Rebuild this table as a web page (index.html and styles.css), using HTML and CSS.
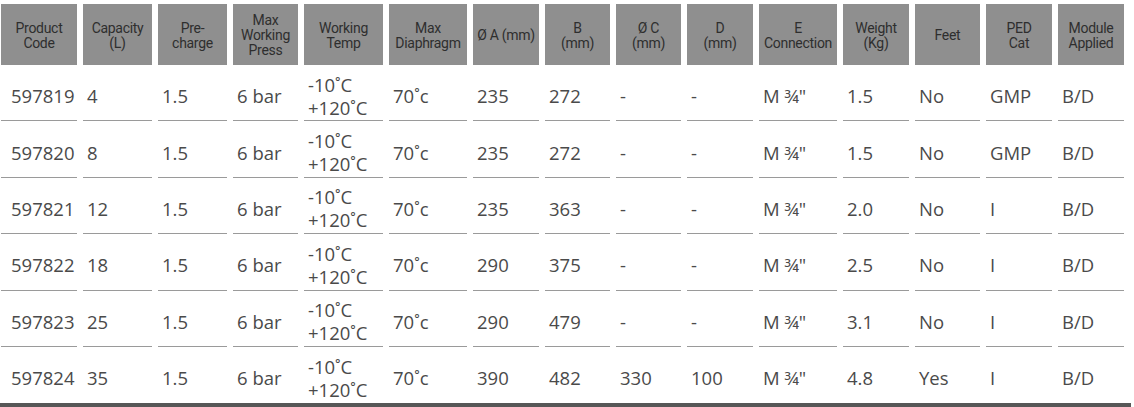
FILE: index.html
```html
<!DOCTYPE html>
<html lang="en">
<head>
<meta charset="utf-8">
<title>Expansion vessels</title>
<link rel="stylesheet" href="styles.css">
</head>
<body>
<div class="table">
  <div class="row head">
    <div class="th">Product<br>Code</div>
    <div class="th">Capacity<br>(L)</div>
    <div class="th">Pre-<br>charge</div>
    <div class="th">Max<br>Working<br>Press</div>
    <div class="th">Working<br>Temp</div>
    <div class="th">Max<br>Diaphragm</div>
    <div class="th">Ø A (mm)</div>
    <div class="th">B<br>(mm)</div>
    <div class="th">Ø C<br>(mm)</div>
    <div class="th">D<br>(mm)</div>
    <div class="th">E<br>Connection</div>
    <div class="th">Weight<br>(Kg)</div>
    <div class="th">Feet</div>
    <div class="th">PED<br>Cat</div>
    <div class="th">Module<br>Applied</div>
  </div>
  <div class="row">
    <div class="td first">597819</div><div class="td">4</div><div class="td">1.5</div><div class="td">6 bar</div>
    <div class="td temp">-10˚C<br>+120˚C</div><div class="td">70˚c</div><div class="td">235</div><div class="td">272</div>
    <div class="td">-</div><div class="td">-</div><div class="td">M ¾"</div><div class="td">1.5</div>
    <div class="td">No</div><div class="td">GMP</div><div class="td">B/D</div>
  </div>
  <div class="row">
    <div class="td first">597820</div><div class="td">8</div><div class="td">1.5</div><div class="td">6 bar</div>
    <div class="td temp">-10˚C<br>+120˚C</div><div class="td">70˚c</div><div class="td">235</div><div class="td">272</div>
    <div class="td">-</div><div class="td">-</div><div class="td">M ¾"</div><div class="td">1.5</div>
    <div class="td">No</div><div class="td">GMP</div><div class="td">B/D</div>
  </div>
  <div class="row">
    <div class="td first">597821</div><div class="td">12</div><div class="td">1.5</div><div class="td">6 bar</div>
    <div class="td temp">-10˚C<br>+120˚C</div><div class="td">70˚c</div><div class="td">235</div><div class="td">363</div>
    <div class="td">-</div><div class="td">-</div><div class="td">M ¾"</div><div class="td">2.0</div>
    <div class="td">No</div><div class="td">I</div><div class="td">B/D</div>
  </div>
  <div class="row">
    <div class="td first">597822</div><div class="td">18</div><div class="td">1.5</div><div class="td">6 bar</div>
    <div class="td temp">-10˚C<br>+120˚C</div><div class="td">70˚c</div><div class="td">290</div><div class="td">375</div>
    <div class="td">-</div><div class="td">-</div><div class="td">M ¾"</div><div class="td">2.5</div>
    <div class="td">No</div><div class="td">I</div><div class="td">B/D</div>
  </div>
  <div class="row">
    <div class="td first">597823</div><div class="td">25</div><div class="td">1.5</div><div class="td">6 bar</div>
    <div class="td temp">-10˚C<br>+120˚C</div><div class="td">70˚c</div><div class="td">290</div><div class="td">479</div>
    <div class="td">-</div><div class="td">-</div><div class="td">M ¾"</div><div class="td">3.1</div>
    <div class="td">No</div><div class="td">I</div><div class="td">B/D</div>
  </div>
  <div class="row last">
    <div class="td first">597824</div><div class="td">35</div><div class="td">1.5</div><div class="td">6 bar</div>
    <div class="td temp">-10˚C<br>+120˚C</div><div class="td">70˚c</div><div class="td">390</div><div class="td">482</div>
    <div class="td">330</div><div class="td">100</div><div class="td">M ¾"</div><div class="td">4.8</div>
    <div class="td">Yes</div><div class="td">I</div><div class="td">B/D</div>
  </div>
  <div class="table-end"></div>
</div>
</body>
</html>
```

FILE: styles.css
```css
html, body {
  margin: 0;
  padding: 0;
  background: #ffffff;
}

body {
  font-family: "Open Sans", "Noto Sans", sans-serif;
  color: #4a4a4a;
}

.table {
  display: flex;
  flex-direction: column;
  padding: 4px 0 0 1px;
  width: 1133px;
  box-sizing: border-box;
}

.row {
  display: grid;
  grid-template-columns: 76px 69px 69px 65px 79px 78px 66px 65px 65px 66px 78px 66px 65px 66px 66px;
  column-gap: 6px;
}

.th {
  background: #8f8f8f;
  color: #2e2e2e;
  font-family: Roboto, "Liberation Sans", sans-serif;
  font-size: 14px;
  letter-spacing: -0.3px;
  line-height: 15px;
  height: 61px;
  padding-top: 2px;
  box-sizing: border-box;
  display: flex;
  align-items: center;
  justify-content: center;
  text-align: center;
}

.td {
  height: 56.4px;
  box-sizing: border-box;
  border-bottom: 1px solid #9a9a9a;
  display: flex;
  align-items: center;
  padding: 6px 0 0 4px;
  font-size: 18.5px;
  line-height: 23px;
  white-space: nowrap;
}

.td.first {
  padding-left: 10px;
}

.row.last .td {
  border-bottom-color: transparent;
}

.table-end {
  height: 4px;
  background: #575757;
  margin-left: -1px;
  width: 1131px;
}
```
